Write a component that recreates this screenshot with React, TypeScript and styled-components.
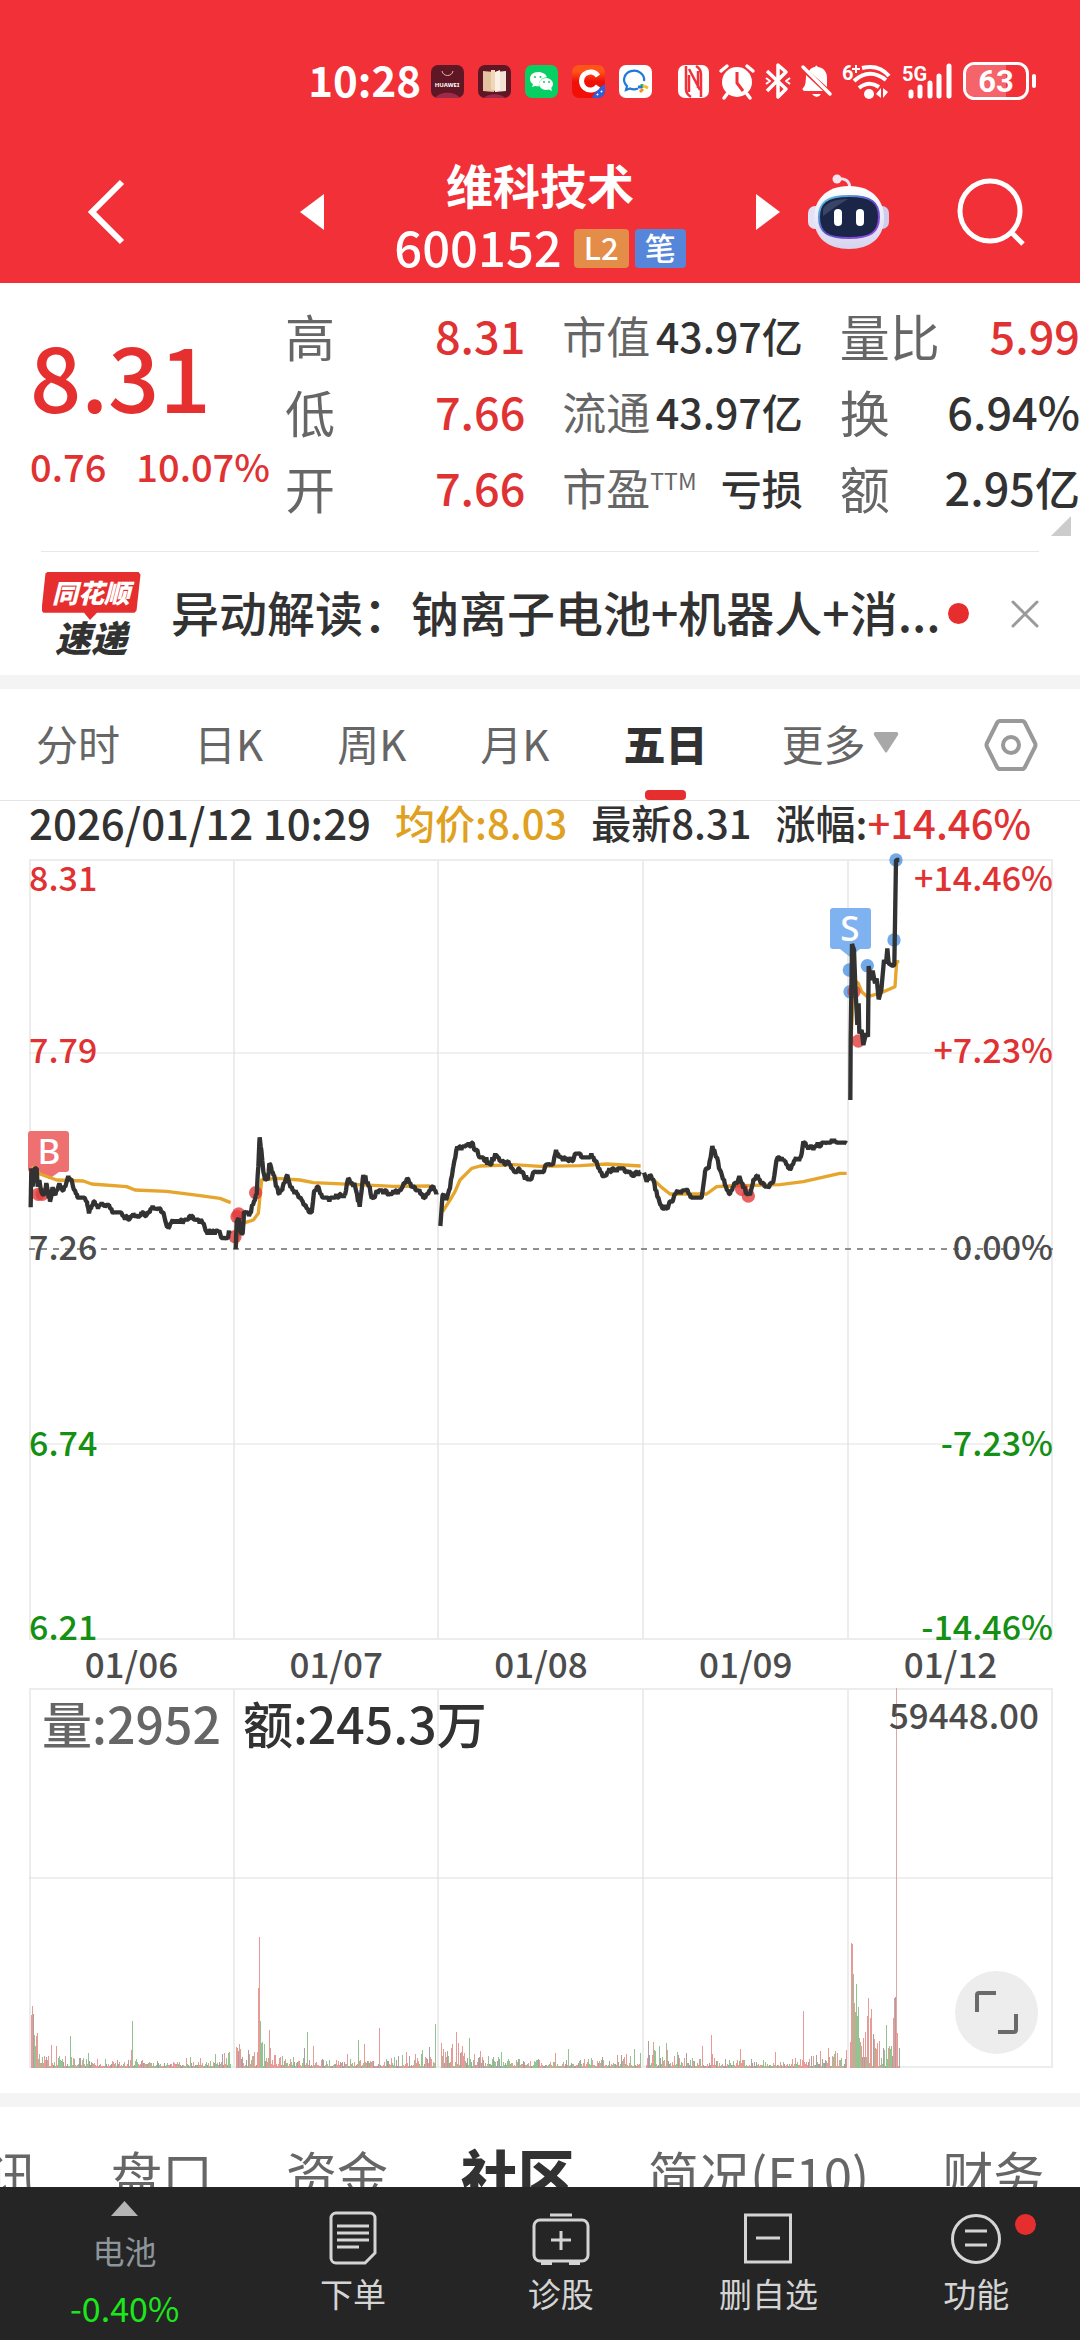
import React from 'react';
import styled, { createGlobalStyle } from 'styled-components';

const RED = '#e03232';
const INK = '#323232';
const MUTED = '#666666';
const GREEN = '#149014';
const FONT = "'Noto Sans CJK SC', 'Noto Sans', sans-serif";

const GlobalStyle = createGlobalStyle`
  *, *::before, *::after { box-sizing: border-box; }
  body { margin: 0; background: #ffffff; }
  body, button { font-family: ${FONT}; }
  button { margin: 0; padding: 0; border: 0; background: none; color: inherit; font-size: inherit; line-height: inherit; cursor: pointer; }
  h1, p, dl, dt, dd { margin: 0; font-weight: inherit; }
  svg { display: block; flex: none; overflow: visible; }
`;

const Screen = styled.div`
  display: flex;
  flex-direction: column;
  height: 100vh;
  overflow: hidden;
  color: ${INK};
  font-weight: 500;
`;

/* ---------- header ---------- */

const Header = styled.header`
  flex: none;
  background: #f13038;
  color: #ffffff;
  padding-bottom: 14px;
`;

const StatusBar = styled.div`
  display: flex;
  align-items: center;
  justify-content: flex-end;
  height: 147px;
  padding: 15px 44px 0 0;
`;

const Clock = styled.span`
  font-size: 42px;
  line-height: 44px;
  font-weight: 700;
  padding-bottom: 4px;
  margin-right: 10px;
`;

const AppIcons = styled.div`
  display: flex;
  gap: 14px;
  margin-right: 26px;
`;

const SystemIcons = styled.div`
  display: flex;
  align-items: center;
  gap: 10px;
`;

const TitleBar = styled.div`
  display: grid;
  grid-template-columns: 3fr 4fr 3fr;
  align-items: center;
  height: 122px;
`;

const TitleSide = styled.div<{ $end?: boolean }>`
  display: flex;
  align-items: center;
  justify-content: space-between;
  padding: ${p => (p.$end ? '0 55px 0 0' : '0 0 0 88px')};
`;

const IconButton = styled.button`
  display: flex;
  align-items: center;
  justify-content: center;
`;

const AssistantButton = styled(IconButton)`
  margin: 0 auto 0 28px;
`;

const TitleText = styled.div`
  display: flex;
  flex-direction: column;
  align-items: center;
  padding-top: 6px;
`;

const StockName = styled.h1`
  font-size: 47px;
  line-height: 62px;
  font-weight: 700;
`;

const CodeRow = styled.div`
  display: flex;
  align-items: center;
  gap: 12px;
  font-size: 49px;
  line-height: 62px;
`;

const Badges = styled.div`
  display: flex;
  gap: 6px;
  padding-top: 4px;
`;

const Badge = styled.span<{ $color: string }>`
  background: ${p => p.$color};
  border-radius: 4px;
  padding: 0 10px;
  height: 39px;
  font-size: 31px;
  line-height: 36px;
`;

/* ---------- quote ---------- */

const Quote = styled.section`
  position: relative;
  display: flex;
  flex: none;
  padding: 14px 0 26px 30px;
`;

const PriceBlock = styled.div`
  width: 255px;
  padding-top: 31px;
  color: #e63030;
`;

const Price = styled.p`
  font-size: 90px;
  line-height: 92px;
`;

const Change = styled.p`
  display: flex;
  gap: 30px;
  margin-top: 22px;
  font-size: 38px;
  line-height: 48px;
  color: ${RED};
`;

const Stats = styled.div`
  flex: 1;
  display: grid;
  grid-template-columns: repeat(3, 1fr);
  column-gap: 37px;
`;

const StatList = styled.dl<{ $size: number }>`
  font-size: ${p => p.$size}px;
`;

const Stat = styled.div`
  display: flex;
  justify-content: space-between;
  height: 76px;
  line-height: 76px;
  white-space: nowrap;
`;

const StatLabel = styled.dt<{ $size: number }>`
  color: ${MUTED};
  font-size: ${p => p.$size}px;
  font-weight: 400;
`;

const StatValue = styled.dd<{ $up?: boolean }>`
  color: ${p => (p.$up ? RED : INK)};
`;

const Sup = styled.sup`
  font-size: 23px;
  line-height: 23px;
`;

const Corner = styled.i`
  position: absolute;
  right: 9px;
  bottom: 15px;
  width: 20px;
  height: 20px;
  background: #cccccc;
  clip-path: polygon(100% 0, 100% 100%, 0 100%);
`;

/* ---------- news ---------- */

const News = styled.section`
  flex: none;
  display: flex;
  align-items: center;
  height: 124px;
  margin: 0 41px;
  border-top: 1px solid #e8e8e8;
`;

const NewsLogo = styled.div`
  display: flex;
  flex-direction: column;
  align-items: center;
  width: 100px;
  padding-bottom: 3px;
  font-style: italic;
  font-weight: 900;
`;

const LogoTop = styled.span`
  width: 99px;
  height: 48px;
  background: #e62e2e;
  clip-path: polygon(6% 0, 98% 0, 100% 5%, 96% 80%, 94% 85%, 56% 85%, 49% 100%, 43% 85%, 2% 85%, 0 80%, 4% 3%);
  color: #ffffff;
  font-size: 26px;
  line-height: 39px;
  text-align: center;
`;

const LogoBottom = styled.span`
  font-size: 36px;
  line-height: 32px;
`;

const NewsLink = styled.a`
  flex: 1;
  margin-left: 30px;
  padding-bottom: 6px;
  font-size: 48px;
  line-height: 60px;
  color: ${INK};
  text-decoration: none;
  white-space: nowrap;
`;

const Dot = styled.i`
  width: 21px;
  height: 21px;
  border-radius: 50%;
  background: #e62e2e;
`;

const CloseButton = styled(IconButton)`
  margin-left: 42px;
`;

const Divider = styled.div`
  flex: none;
  height: 14px;
  background: #f4f4f4;
`;

/* ---------- period tabs ---------- */

const PeriodTabs = styled.nav`
  flex: none;
  display: flex;
  align-items: stretch;
  gap: 74px;
  height: 112px;
  padding: 0 42px 0 36px;
  border-bottom: 1px solid #e4e4e4;
  font-size: 42px;
`;

const PeriodTab = styled.button<{ $active?: boolean }>`
  position: relative;
  display: flex;
  align-items: center;
  gap: 8px;
  padding-bottom: 4px;
  white-space: nowrap;
  font-weight: ${p => (p.$active ? 900 : 400)};
  color: ${p => (p.$active ? INK : MUTED)};
  &::after {
    content: '';
    display: ${p => (p.$active ? 'block' : 'none')};
    position: absolute;
    left: 50%;
    bottom: 0;
    width: 41px;
    height: 10px;
    margin-left: -20px;
    border-radius: 4px;
    background: #e62e2e;
  }
`;

const SettingsButton = styled(IconButton)`
  margin-left: auto;
`;

const Readout = styled.div`
  flex: none;
  display: flex;
  gap: 24px;
  padding: 0 29px;
  height: 58px;
  font-size: 40px;
  line-height: 42px;
  white-space: nowrap;
`;

const Moment = styled.time`
  font-size: 42px;
`;

const Tint = styled.span<{ $color: string }>`
  color: ${p => p.$color};
`;

/* ---------- charts ---------- */

const Frame = styled.div<{ $height: number }>`
  flex: none;
  position: relative;
  height: ${p => p.$height}px;
  margin: 0 27px 0 29px;
`;

const Plot = styled.svg`
  width: 100%;
  height: 100%;
`;

const Scale = styled.div<{ $right?: boolean }>`
  position: absolute;
  top: 0;
  bottom: -5px;
  ${p => (p.$right ? 'right: 0; text-align: right;' : 'left: 0;')}
  display: grid;
  grid-template-rows: 1fr 2fr 2fr 2fr 1fr;
  align-items: center;
  font-size: 34px;
  line-height: 36px;
`;

const Tick = styled.span<{ $color: string }>`
  color: ${p => p.$color};
  padding-bottom: 12px;
  &:first-child { align-self: start; }
  &:last-child { align-self: end; padding-bottom: 0; }
`;

const Dates = styled.div`
  flex: none;
  display: grid;
  grid-template-columns: repeat(5, 1fr);
  margin: 0 27px 0 29px;
  height: 49px;
  font-size: 35px;
  line-height: 48px;
  text-align: center;
  color: #4c4c4c;
`;

const VolumeInfo = styled.div`
  position: absolute;
  left: 13px;
  right: 14px;
  top: 0;
  display: flex;
  gap: 22px;
  font-size: 50px;
  line-height: 68px;
`;

const VolumeMax = styled.span`
  margin-left: auto;
  font-size: 35px;
  line-height: 52px;
  color: #4c4c4c;
`;

const ExpandButton = styled(IconButton)`
  position: absolute;
  right: 15px;
  bottom: 14px;
  width: 83px;
  height: 83px;
  border-radius: 50%;
  background: #ededed;
`;

/* ---------- lower tabs and bottom bar ---------- */

const Main = styled.main`
  flex: 1;
  min-height: 0;
  overflow: hidden;
  display: flex;
  flex-direction: column;
`;

const ChartDivider = styled(Divider)`
  margin-top: 25px;
`;

const SectionTabs = styled.nav`
  flex: none;
  display: flex;
  gap: 73px;
  margin-left: -64px;
  padding-top: 36px;
  line-height: 60px;
  white-space: nowrap;
`;

const SectionTab = styled.button<{ $active?: boolean }>`
  flex: none;
  font-size: ${p => (p.$active ? 57 : 51)}px;
  font-weight: ${p => (p.$active ? 900 : 400)};
  color: ${p => (p.$active ? INK : MUTED)};
`;

const BottomBar = styled.nav`
  flex: none;
  display: grid;
  grid-template-columns: 6fr 5fr 5fr 5fr 5fr;
  height: 153px;
  background: #252525;
  color: #d4d4d4;
  font-size: 33px;
  line-height: 40px;
`;

const BottomItem = styled.button`
  display: flex;
  flex-direction: column;
  align-items: center;
  gap: 8px;
  padding-top: 24px;
`;

const SectorItem = styled(BottomItem)`
  gap: 14px;
  padding-top: 14px;
  font-size: 32px;
  color: #8d969b;
`;

const SectorChange = styled.span`
  font-size: 34px;
  padding-top: 4px;
  color: #1ce61c;
`;

const IconWrap = styled.span`
  position: relative;
`;

const NoticeDot = styled(Dot)`
  position: absolute;
  left: 64px;
  top: 3px;
`;

/* ---------- chart data ---------- */

type Pt = [number, number];

interface Marker { x: number; y: number; kind: 'buy' | 'sell' }
interface Session { dx: number; dy: number; price: Pt[][]; average: Pt[][]; marks: Marker[] }

const STEP = 11;

/* One sample per minute between the turning points, snapped to the price tick. */
function minuteLine(points: Pt[], seed: number): string {
  let s = seed;
  const rnd = () => {
    s = (s * 1103515245 + 12345) % 2147483648;
    return s / 2147483648;
  };
  const out: string[] = [`M${points[0][0]} ${points[0][1]}`];
  for (let i = 1; i < points.length; i++) {
    const [x0, y0] = points[i - 1];
    const [x1, y1] = points[i];
    for (let x = x0 + 3; x < x1; x += 3) {
      const y = y0 + ((y1 - y0) * (x - x0)) / (x1 - x0);
      const snapped = Math.round((y + (rnd() - 0.5) * 12 - 447) / STEP) * STEP + 447;
      out.push(`L${x} ${snapped}`);
    }
    out.push(`L${x1} ${y1}`);
  }
  return out.join('');
}

const plainLine = (points: Pt[]) => 'M' + points.map(p => p.join(' ')).join('L');

const sessions: Session[] = [
  {
    dx: -29, dy: 241,
    price: [
      [[92, 322], [94, 205], [98, 260], [104, 205], [110, 205], [113, 260], [118, 240], [124, 275], [130, 285], [140, 255], [150, 305], [158, 262], [166, 285], [178, 250], [190, 272], [205, 228], [216, 245], [222, 270], [232, 292], [255, 295], [262, 315], [267, 340], [275, 318], [285, 310], [296, 320], [305, 308], [315, 322], [328, 318], [338, 338], [365, 340], [372, 350], [390, 355], [400, 340], [415, 352], [425, 338], [440, 345], [458, 318], [468, 330], [478, 325], [492, 345], [505, 385], [515, 365], [550, 365], [575, 348], [590, 360], [605, 362], [620, 395], [655, 395], [675, 415], [688, 400]],
      [[707, 447], [710, 365], [716, 355], [722, 395], [728, 400], [732, 335], [750, 340], [765, 300], [770, 285], [775, 200], [779, 112], [784, 150], [790, 215], [795, 240], [803, 240], [808, 190], [815, 215], [822, 225], [835, 280], [848, 262], [862, 225], [872, 262], [890, 280], [905, 300], [918, 320], [926, 335], [936, 330], [942, 275], [955, 260], [966, 290], [985, 295], [1010, 290], [1035, 285], [1045, 235], [1065, 258], [1079, 320], [1090, 225], [1103, 245], [1115, 295], [1135, 270], [1165, 285], [1190, 275], [1205, 265], [1222, 235], [1235, 262], [1258, 268], [1270, 295], [1285, 280], [1300, 258], [1310, 278]],
    ],
    average: [
      [[95, 200], [120, 222], [170, 240], [250, 243], [275, 252], [380, 260], [405, 270], [500, 274], [600, 287], [660, 295], [692, 308]],
      [[708, 440], [720, 380], [735, 368], [760, 360], [775, 340], [780, 290], [785, 240], [830, 235], [900, 240], [940, 248], [1120, 256], [1180, 259], [1290, 258]],
    ],
    marks: [
      { x: 115, y: 283, kind: 'buy' }, { x: 127, y: 283, kind: 'buy' },
      { x: 767, y: 278, kind: 'buy' }, { x: 711, y: 350, kind: 'buy' },
      { x: 716, y: 342, kind: 'buy' }, { x: 705, y: 410, kind: 'buy' },
    ],
  },
  {
    dx: 391, dy: 241,
    price: [
      [[61, 378], [68, 285], [78, 300], [90, 265], [100, 200], [112, 140], [125, 145], [140, 133], [160, 138], [175, 165], [208, 190], [230, 165], [245, 185], [262, 185], [280, 210], [300, 215], [328, 240], [345, 215], [365, 215], [385, 190], [400, 190], [408, 150], [420, 170], [450, 180], [475, 160], [490, 172], [520, 170], [535, 205], [550, 230], [575, 208], [600, 205], [620, 212], [640, 228], [662, 215]],
      [[672, 218], [680, 245], [690, 225], [700, 240], [712, 290], [725, 320], [740, 325], [755, 305], [770, 275], [785, 275], [800, 268], [815, 292], [845, 292], [855, 215], [866, 205], [877, 138], [885, 160], [900, 210], [915, 255], [927, 282], [940, 262], [958, 228], [970, 265], [990, 285], [1000, 238], [1013, 225], [1025, 250], [1045, 262], [1060, 245], [1070, 180], [1090, 178], [1110, 210], [1125, 180], [1142, 172], [1150, 125], [1165, 148], [1190, 138], [1215, 130], [1247, 124], [1280, 130]],
    ],
    average: [
      [[68, 335], [90, 300], [105, 275], [120, 240], [155, 205], [180, 198], [280, 194], [360, 199], [480, 197], [560, 192], [662, 198]],
      [[675, 225], [700, 238], [725, 262], [750, 282], [860, 282], [890, 260], [930, 258], [1080, 254], [1150, 245], [1260, 220], [1280, 220]],
    ],
    marks: [{ x: 965, y: 268, kind: 'buy' }, { x: 985, y: 288, kind: 'buy' }],
  },
  {
    dx: 751, dy: -19,
    price: [
      [[211, 780], [212, 600], [216, 312], [222, 330], [226, 440], [232, 555], [236, 490], [238, 580], [245, 570], [250, 615], [258, 580], [264, 590], [266, 378], [272, 420], [278, 392], [285, 430], [290, 415], [296, 478], [304, 450], [312, 360], [318, 370], [322, 325], [326, 370], [338, 378], [343, 375], [348, 60], [358, 60]],
    ],
    average: [[[213, 600], [222, 420], [235, 430], [245, 455], [262, 470], [300, 460], [345, 440], [350, 365], [358, 365]]],
    marks: [
      { x: 208, y: 390, kind: 'sell' }, { x: 210, y: 455, kind: 'sell' },
      { x: 222, y: 455, kind: 'buy' }, { x: 235, y: 603, kind: 'buy' },
      { x: 262, y: 377, kind: 'sell' }, { x: 342, y: 300, kind: 'sell' },
      { x: 348, y: 60, kind: 'sell' },
    ],
  },
];

type Bar = [x: number, height: number, color: string];
const UP = '#e79a96';
const DOWN = '#93c390';
const FLAT = '#a9a0a3';

const peaks: Bar[] = [
  [2, 53, UP], [3, 62, UP], [4, 54, FLAT], [5, 33, DOWN], [6, 22, DOWN], [7, 32, UP], [8, 35, UP], [10, 14, DOWN], [22, 23, UP], [27, 22, UP], [36, 12, UP], [41, 32, DOWN], [59, 15, DOWN],
  [102, 18, UP], [103, 47, DOWN],
  [207, 19, UP], [208, 20, UP], [210, 24, UP], [229, 80, UP], [230, 131, UP], [231, 47, DOWN], [232, 25, DOWN], [233, 26, DOWN], [235, 24, DOWN], [240, 38, UP], [241, 20, UP],
  [275, 20, FLAT], [278, 36, DOWN], [284, 22, UP], [318, 14, UP], [329, 28, DOWN], [335, 24, UP], [350, 40, UP], [377, 16, UP], [393, 18, DOWN], [400, 21, FLAT], [406, 44, DOWN],
  [412, 25, UP], [414, 19, UP], [423, 24, UP], [427, 36, UP], [429, 25, UP], [433, 22, UP], [440, 30, DOWN], [451, 17, UP], [472, 16, DOWN], [526, 15, UP], [539, 19, DOWN], [605, 19, DOWN],
  [630, 22, DOWN], [637, 25, DOWN], [648, 16, DOWN], [657, 15, FLAT], [673, 22, UP], [682, 33, UP], [683, 14, UP], [711, 19, UP], [746, 16, UP], [774, 57, UP], [791, 17, UP], [799, 20, UP], [817, 18, UP],
  [821, 26, UP], [822, 125, UP], [823, 124, UP], [824, 94, DOWN], [825, 65, UP], [826, 56, DOWN], [827, 84, DOWN], [828, 52, DOWN], [829, 61, DOWN], [830, 30, DOWN], [831, 26, UP], [832, 22, DOWN],
  [834, 30, UP], [836, 36, UP], [838, 52, UP], [839, 70, UP], [841, 50, UP], [842, 59, UP], [844, 34, FLAT], [846, 20, DOWN], [850, 18, UP], [854, 20, FLAT], [857, 43, DOWN], [859, 20, UP],
  [864, 50, UP], [865, 70, UP], [866, 71, FLAT], [867, 380, '#dfa5a5'], [868, 35, UP], [870, 20, FLAT],
];

function minuteBars(): Bar[] {
  let s = 77;
  const rnd = () => {
    s = (s * 1103515245 + 12345) % 2147483648;
    return s / 2147483648;
  };
  const bars: Bar[] = [];
  for (let day = 0; day < 5; day++) {
    const start = day * 205 + 2;
    const end = day === 4 ? start + 48 : start + 200;
    for (let x = start; x < end; x++) {
      const t = (x - start) / 200;
      const open = (day === 4 ? 16 : day === 0 ? 9 : 14) * Math.exp(-t * (day === 4 ? 1 : 7));
      const close = day === 4 ? 0 : 8 * Math.max(0, t - 0.7) * 3;
      const h = 2 + (open + close + 4) * Math.pow(rnd(), 2) * 1.6;
      const c = rnd();
      bars.push([x, Math.round(h), c < 0.4 ? UP : c < 0.75 ? DOWN : FLAT]);
    }
  }
  return bars;
}

const bars = [...minuteBars(), ...peaks];
const columns = [1, 205, 409, 614, 819, 1023];

const PriceChart = () => (
  <Frame $height={780}>
    <Plot viewBox="0 0 1024 780" preserveAspectRatio="none" role="img" aria-label="五日价格走势">
      <g stroke="#ececec" strokeWidth="2" fill="none">
        {columns.map(x => <path key={x} d={`M${x} 0V780`} />)}
        <path d="M0 1H1024M0 780H1024" />
        <path d="M0 194H1024M0 585H1024" stroke="#e2e2e2" strokeWidth="1" />
      </g>
      <path d="M0 390H1024" stroke="#8f8f8f" strokeWidth="2" strokeDasharray="6 6" />
      <g fontFamily="Noto Sans" fontSize="35" fill="#ffffff" textAnchor="middle">
        <path d="M2 272H37a3 3 0 0 1 3 3V310a3 3 0 0 1-3 3H30L20 320L10 313H2a3 3 0 0 1-3-3V275a3 3 0 0 1 3-3Z" fill="#ef7070" />
        <text x="20" y="305">B</text>
        <path d="M804 49H839a3 3 0 0 1 3 3V87a3 3 0 0 1-3 3H831L821 98L811 90H804a3 3 0 0 1-3-3V52a3 3 0 0 1 3-3Z" fill="#7fb2f0" />
        <text x="821" y="82">S</text>
      </g>
      {sessions.map((s, i) => (
        <g key={i} transform={`translate(${s.dx} ${s.dy}) scale(.33333)`} fill="none">
          {s.average.map((a, k) => (
            <path key={k} d={plainLine(a)} stroke="#e6a52c" strokeWidth="10" strokeLinejoin="round" />
          ))}
          {s.marks.map((m, k) => (
            <circle key={k} cx={m.x} cy={m.y} r="20" fill={m.kind === 'buy' ? '#e43b3b' : '#4f93e2'} fillOpacity=".8" />
          ))}
          {s.price.map((p, k) => (
            <path key={k} d={i === 2 ? plainLine(p) : minuteLine(p, 11 + i * 7 + k)} stroke={INK} strokeWidth="13" strokeLinejoin="bevel" />
          ))}
        </g>
      ))}
    </Plot>
    <Scale>
      <Tick $color={RED}>8.31</Tick>
      <Tick $color={RED}>7.79</Tick>
      <Tick $color="#4c4c4c">7.26</Tick>
      <Tick $color={GREEN}>6.74</Tick>
      <Tick $color={GREEN}>6.21</Tick>
    </Scale>
    <Scale $right>
      <Tick $color={RED}>+14.46%</Tick>
      <Tick $color={RED}>+7.23%</Tick>
      <Tick $color="#4c4c4c">0.00%</Tick>
      <Tick $color={GREEN}>-7.23%</Tick>
      <Tick $color={GREEN}>-14.46%</Tick>
    </Scale>
  </Frame>
);

const VolumeChart = () => (
  <Frame $height={380}>
    <Plot viewBox="0 0 1024 380" preserveAspectRatio="none" role="img" aria-label="成交量">
      <g stroke="#ececec" strokeWidth="2" fill="none">
        {columns.map(x => <path key={x} d={`M${x} 0V380`} />)}
        <path d="M0 1H1024M0 379H1024" />
        <path d="M0 190H1024" stroke="#dedede" strokeWidth="1" />
      </g>
      {bars.map(([x, h, c], i) => (
        <rect key={i} x={x} y={380 - h} width="1" height={h} fill={c} />
      ))}
    </Plot>
    <VolumeInfo>
      <Tint $color={MUTED}>量:2952</Tint>
      <span>额:245.3万</span>
      <VolumeMax>59448.00</VolumeMax>
    </VolumeInfo>
    <ExpandButton aria-label="全屏">
      <svg width="43" height="43" viewBox="0 0 43 43" fill="none" stroke="#6a6a6a" strokeWidth="4">
        <path d="M2 21V4a2 2 0 0 1 2-2H21M41 23V39a2 2 0 0 1-2 2H23" />
      </svg>
    </ExpandButton>
  </Frame>
);

/* ---------- icons ---------- */

const BagIcon = () => (
  <svg width="33" height="33" viewBox="0 0 33 33">
    <rect width="33" height="33" rx="7" fill="#5f1725" />
    <path d="M4 33C9 26 24 26 29 33Z" fill="#9c2a48" />
    <path d="M11 6c1 6 10 6 11 0" fill="none" stroke="#e8b9a0" strokeWidth="1" />
    <text x="16" y="22" fill="#ffffff" fontSize="6" fontFamily="Noto Sans" fontWeight="700" textAnchor="middle">HUAWEI</text>
  </svg>
);

const BookIcon = () => (
  <svg width="33" height="33" viewBox="0 0 33 33">
    <rect width="33" height="33" rx="7" fill="#5f1725" />
    <path d="M6 33C10 28 23 28 27 33Z" fill="#9c2a48" />
    <path d="M5 6l11 1v20l-11-1Z" fill="#e3c3a0" />
    <path d="M28 6l-11 1v20l11-1Z" fill="#f2e2d2" />
    <path d="M13 5h4v21l-4-2Z" fill="#f0d7b8" />
    <path d="M17 7l5-2v20l-5 2Z" fill="#faf0e6" />
  </svg>
);

const WeChatIcon = () => (
  <svg width="33" height="33" viewBox="0 0 33 33">
    <rect width="33" height="33" rx="7" fill="#08cf63" />
    <path d="M13 7c-5 0-8 3-8 7 0 2 1 4 3 5l-1 3 3-1c1 0 2 .4 4 .3-1-5 3-9 8-9-1-3-4-5.300-9-5.300Z" fill="#fff" />
    <ellipse cx="21" cy="19" rx="7" ry="6" fill="#fff" />
    <path d="M23 24l4 2-1-4Z" fill="#fff" />
    <g fill="#08cf63"><circle cx="10" cy="12" r="1" /><circle cx="15.500" cy="12" r="1" /><circle cx="19" cy="17" r="1" /><circle cx="24" cy="17" r="1" /></g>
  </svg>
);

const CtripIcon = () => (
  <svg width="33" height="33" viewBox="0 0 33 33">
    <defs>
      <clipPath id="c-clip"><rect width="33" height="33" rx="7" /></clipPath>
      <linearGradient id="c-fill" x1="0" y1="0" x2="0" y2="1"><stop offset=".2" stopColor="#ff5418" /><stop offset=".5" stopColor="#f01008" /></linearGradient>
    </defs>
    <g clipPath="url(#c-clip)">
      <rect width="33" height="33" fill="url(#c-fill)" />
      <path d="M20 33Q24 24 33 19V33Z" fill="#2e60d8" />
    </g>
    <path d="M26 11A9 9 0 1 0 26 21" fill="none" stroke="#fff" strokeWidth="5" />
    <path d="M25 29l1 1M29 26l1 1" stroke="#fff" strokeWidth="2" />
  </svg>
);

const ChatIcon = () => (
  <svg width="33" height="33" viewBox="0 0 33 33" fill="none">
    <rect width="33" height="33" rx="7" fill="#fff" />
    <path d="M25 16a10 9 0 1 0-17 5l-1 4 4-1.500a10 9 0 0 0 8 0" stroke="#2277d8" strokeWidth="2.200" />
    <path d="M23 19v4" stroke="#58a942" strokeWidth="3" />
    <path d="M19 22h4" stroke="#2277d8" strokeWidth="3" />
    <path d="M21 27l3-3" stroke="#ee9128" strokeWidth="3" />
    <path d="M25 21l4 2" stroke="#f3bd22" strokeWidth="3" />
  </svg>
);

const NfcIcon = () => (
  <svg width="31" height="33" viewBox="0 0 31 33">
    <rect width="31" height="33" rx="7" fill="#fff" />
    <path d="M8 1V24q0 5 5 8M11 4L22 25M23 32V9q0-5-5-8M11 10V27M20 6V23" fill="none" stroke="#f13038" strokeWidth="2.500" />
  </svg>
);

const AlarmIcon = () => (
  <svg width="36" height="36" viewBox="0 0 36 36" fill="none" stroke="#fff" strokeLinecap="round">
    <circle cx="18" cy="19" r="15" fill="#fff" stroke="none" />
    <path d="M2 8l6-5M34 8l-6-5M8 31l-3 4M28 31l3 4" strokeWidth="3.500" />
    <path d="M18 9v11l6 8" stroke="#f13038" strokeWidth="3" strokeLinecap="butt" />
  </svg>
);

const BluetoothIcon = () => (
  <svg width="26" height="36" viewBox="0 0 26 36" fill="none" stroke="#fff" strokeWidth="3.500" strokeLinejoin="round">
    <path d="M2 8L21 26L13 34V2L21 9L2 28" />
    <path d="M1 15l4 3-4 3M25 15l-4 3 4 3" strokeWidth="2" />
  </svg>
);

const BellOffIcon = () => (
  <svg width="31" height="36" viewBox="0 0 31 36">
    <path d="M8 8c2-3 4-4 6-4q1-3 3 0c6 1 9 5 9 11v9ZM5 12L22 28H3q-3-2 0-4q2-3 2-12Z" fill="#fff" />
    <path d="M2 4L29 31" stroke="#fff" strokeWidth="3.500" strokeLinecap="round" />
    <path d="M11 31h9q-4 6-9 0Z" fill="#fff" />
  </svg>
);

const WifiIcon = () => (
  <svg width="50" height="37" viewBox="0 0 50 37" fill="none" stroke="#fff" strokeWidth="4">
    <text x="0" y="17" fill="#fff" stroke="none" fontFamily="Roboto" fontWeight="700" fontSize="20">6</text>
    <path d="M10 6h8M14 2v8" strokeWidth="2" />
    <path d="M20 5q17-4 27 8M12 18q15-14 32-1M17 25q10-8 20-1" />
    <circle cx="27" cy="31" r="5" fill="#fff" stroke="none" />
    <path d="M34 31l5-6v10ZM46 29l-5-4v10Z" fill="#fff" stroke="none" />
  </svg>
);

const SignalIcon = () => (
  <svg width="51" height="36" viewBox="0 0 51 36">
    <text x="0" y="18" fill="#fff" fontFamily="Roboto" fontWeight="700" fontSize="20">5G</text>
    <path d="M9 29V33M18 24V33M28 20V33M37 13V33M47 3V33" stroke="#fff" strokeWidth="5" strokeLinecap="round" />
  </svg>
);

const BatteryIcon = () => (
  <svg width="73" height="38" viewBox="0 0 73 38">
    <path d="M12 3H43V35H12a9 9 0 0 1-9-9V12a9 9 0 0 1 9-9Z" fill="#fff" fillOpacity=".25" />
    <rect x="1.500" y="1.500" width="63" height="35" rx="10" fill="none" stroke="#fff" strokeWidth="3" />
    <path d="M71 14V24" stroke="#fff" strokeWidth="4" strokeLinecap="round" />
    <text x="33" y="30" fill="#fff" fontFamily="Roboto" fontWeight="700" fontSize="31" textAnchor="middle">63</text>
  </svg>
);

const RobotIcon = () => (
  <svg width="81" height="76" viewBox="0 0 81 76">
    <defs>
      <linearGradient id="r-head" x1="0" y1="0" x2="0" y2="1"><stop offset="0" stopColor="#ffffff" /><stop offset="1" stopColor="#d6d4ee" /></linearGradient>
      <linearGradient id="r-rim" x1="0" y1="0" x2="1" y2="1"><stop offset="0" stopColor="#58d6e4" /><stop offset=".5" stopColor="#5a50c8" /><stop offset="1" stopColor="#a048e8" /></linearGradient>
    </defs>
    <path d="M29 5q12-2 13 9" fill="none" stroke="#efdff0" strokeWidth="3" />
    <circle cx="29" cy="5" r="4.500" fill="#f6e3f0" />
    <rect x="0" y="32" width="14" height="23" rx="7" fill="#e3e1f5" />
    <rect x="67" y="32" width="14" height="23" rx="7" fill="#cfcdec" />
    <path d="M41 12C65 12 76 27 76 44C76 64 62 75 41 75C20 75 6 64 6 44C6 27 17 12 41 12Z" fill="url(#r-head)" />
    <path d="M41 22C64 22 71 29 71 43C71 59 62 64 41 64C20 64 11 59 11 43C11 29 18 22 41 22Z" fill="#1b2547" stroke="url(#r-rim)" strokeWidth="2" />
    <path d="M15 35Q20 25 40 25Q28 32 15 42Z" fill="#3a4566" />
    <rect x="26" y="35" width="8" height="17" rx="4" fill="#fff" />
    <rect x="48" y="35" width="8" height="17" rx="4" fill="#fff" />
  </svg>
);

const line = { fill: 'none', stroke: '#d4d4d4', strokeWidth: 3 } as const;

const OrderIcon = () => (
  <svg width="48" height="54" viewBox="0 0 48 54" {...line}>
    <path d="M7 2H41a5 5 0 0 1 5 5V42L36 52H7a5 5 0 0 1-5-5V7a5 5 0 0 1 5-5Z" />
    <path d="M8 15H40M8 22H40M8 29H40M8 36H30" />
  </svg>
);

const DiagnoseIcon = () => (
  <svg width="58" height="54" viewBox="0 0 58 54" {...line}>
    <rect x="2" y="9" width="54" height="41" rx="6" />
    <path d="M18 4H40M29 20V39M19 29H39" />
    <path d="M9 52H20M37 52H48" strokeWidth="4" />
  </svg>
);

const RemoveIcon = () => (
  <svg width="48" height="54" viewBox="0 0 48 54" {...line}>
    <path d="M1.500 4H46.500V51H1.500ZM12 27H36" />
  </svg>
);

const FunctionIcon = () => (
  <svg width="50" height="54" viewBox="0 0 50 54" {...line}>
    <circle cx="25" cy="28" r="23.500" />
    <path d="M14 20H36M14 34H36" />
  </svg>
);

/* ---------- page ---------- */

const statColumns = [
  { label: 50, value: 45, rows: [['高', '8.31', true], ['低', '7.66', true], ['开', '7.66', true]] },
  { label: 44, value: 41, rows: [['市值', '43.97亿', false], ['流通', '43.97亿', false], ['市盈', '亏损', false]] },
  { label: 50, value: 45, rows: [['量比', '5.99', true], ['换', '6.94%', false], ['额', '2.95亿', false]] },
] as { label: number; value: number; rows: [string, string, boolean][] }[];

export default function App() {
  return (
    <Screen>
      <GlobalStyle />
      <Header>
        <StatusBar>
          <Clock>10:28</Clock>
          <AppIcons><BagIcon /><BookIcon /><WeChatIcon /><CtripIcon /><ChatIcon /></AppIcons>
          <SystemIcons>
            <NfcIcon /><AlarmIcon /><BluetoothIcon /><BellOffIcon /><WifiIcon /><SignalIcon /><BatteryIcon />
          </SystemIcons>
        </StatusBar>
        <TitleBar>
          <TitleSide>
            <IconButton aria-label="返回">
              <svg width="36" height="64" viewBox="0 0 36 64" fill="none" stroke="#fff" strokeWidth="6"><path d="M34 2L4 32L34 62" /></svg>
            </IconButton>
            <IconButton aria-label="上一只">
              <svg width="24" height="36" viewBox="0 0 24 36"><path d="M24 0V36L0 18Z" fill="#fff" /></svg>
            </IconButton>
          </TitleSide>
          <TitleText>
            <StockName>维科技术</StockName>
            <CodeRow>
              600152
              <Badges>
                <Badge $color="#e38d48">L2</Badge>
                <Badge $color="#5686da">笔</Badge>
              </Badges>
            </CodeRow>
          </TitleText>
          <TitleSide $end>
            <IconButton aria-label="下一只">
              <svg width="24" height="36" viewBox="0 0 24 36"><path d="M0 0V36L24 18Z" fill="#fff" /></svg>
            </IconButton>
            <AssistantButton aria-label="助手"><RobotIcon /></AssistantButton>
            <IconButton aria-label="搜索">
              <svg width="68" height="68" viewBox="0 0 68 68" fill="none" stroke="#fff" strokeWidth="5"><circle cx="33" cy="33" r="30" /><path d="M54 54L66 66" /></svg>
            </IconButton>
          </TitleSide>
        </TitleBar>
      </Header>

      <Main>
        <Quote>
          <PriceBlock>
            <Price>8.31</Price>
            <Change><span>0.76</span><span>10.07%</span></Change>
          </PriceBlock>
          <Stats>
            {statColumns.map((col, i) => (
              <StatList key={i} $size={col.value}>
                {col.rows.map(([label, value, up]) => (
                  <Stat key={label}>
                    <StatLabel $size={col.label}>{label}{label === '市盈' && <Sup>TTM</Sup>}</StatLabel>
                    <StatValue $up={up}>{value}</StatValue>
                  </Stat>
                ))}
              </StatList>
            ))}
          </Stats>
          <Corner />
        </Quote>

        <News>
          <NewsLogo><LogoTop>同花顺</LogoTop><LogoBottom>速递</LogoBottom></NewsLogo>
          <NewsLink href="#news">异动解读：钠离子电池+机器人+消...</NewsLink>
          <Dot />
          <CloseButton aria-label="关闭">
            <svg width="28" height="28" viewBox="0 0 28 28" stroke="#9a9a9a" strokeWidth="3" strokeLinecap="round"><path d="M2 2L26 26M26 2L2 26" /></svg>
          </CloseButton>
        </News>
        <Divider />

        <PeriodTabs>
          <PeriodTab>分时</PeriodTab>
          <PeriodTab>日K</PeriodTab>
          <PeriodTab>周K</PeriodTab>
          <PeriodTab>月K</PeriodTab>
          <PeriodTab $active>五日</PeriodTab>
          <PeriodTab>
            更多
            <svg width="26" height="21" viewBox="0 0 26 21"><path d="M2 0H24q2 1 1 3L14 20q-1 1-2 0L1 3q-1-2 1-3Z" fill="#a8a8a8" /></svg>
          </PeriodTab>
          <SettingsButton aria-label="设置">
            <svg width="54" height="52" viewBox="0 0 54 52" fill="none" stroke="#999999" strokeWidth="4">
              <path d="M16 2H38q2 0 3 2L51 24q1 2 0 4L41 48q-1 2-3 2H16q-2 0-3-2L3 28q-1-2 0-4L13 4q1-2 3-2Z" strokeLinejoin="round" />
              <circle cx="27" cy="26" r="8" />
            </svg>
          </SettingsButton>
        </PeriodTabs>

        <Readout>
          <Moment dateTime="2026-01-12T10:29">2026/01/12 10:29</Moment>
          <Tint $color="#e0a020">均价:8.03</Tint>
          <span>最新8.31</span>
          <span>涨幅:<Tint $color={RED}>+14.46%</Tint></span>
        </Readout>

        <PriceChart />
        <Dates>
          <span>01/06</span><span>01/07</span><span>01/08</span><span>01/09</span><span>01/12</span>
        </Dates>
        <VolumeChart />
        <ChartDivider />

        <SectionTabs>
          <SectionTab>资讯</SectionTab>
          <SectionTab>盘口</SectionTab>
          <SectionTab>资金</SectionTab>
          <SectionTab $active>社区</SectionTab>
          <SectionTab>简况(F10)</SectionTab>
          <SectionTab>财务</SectionTab>
        </SectionTabs>
      </Main>

      <BottomBar>
        <SectorItem>
          <svg width="27" height="15" viewBox="0 0 27 15"><path d="M13.500 0L27 15H0Z" fill="#b4b4b4" /></svg>
          <span>电池</span>
          <SectorChange>-0.40%</SectorChange>
        </SectorItem>
        <BottomItem><OrderIcon />下单</BottomItem>
        <BottomItem><DiagnoseIcon />诊股</BottomItem>
        <BottomItem><RemoveIcon />删自选</BottomItem>
        <BottomItem><IconWrap><FunctionIcon /><NoticeDot /></IconWrap>功能</BottomItem>
      </BottomBar>
    </Screen>
  );
}
